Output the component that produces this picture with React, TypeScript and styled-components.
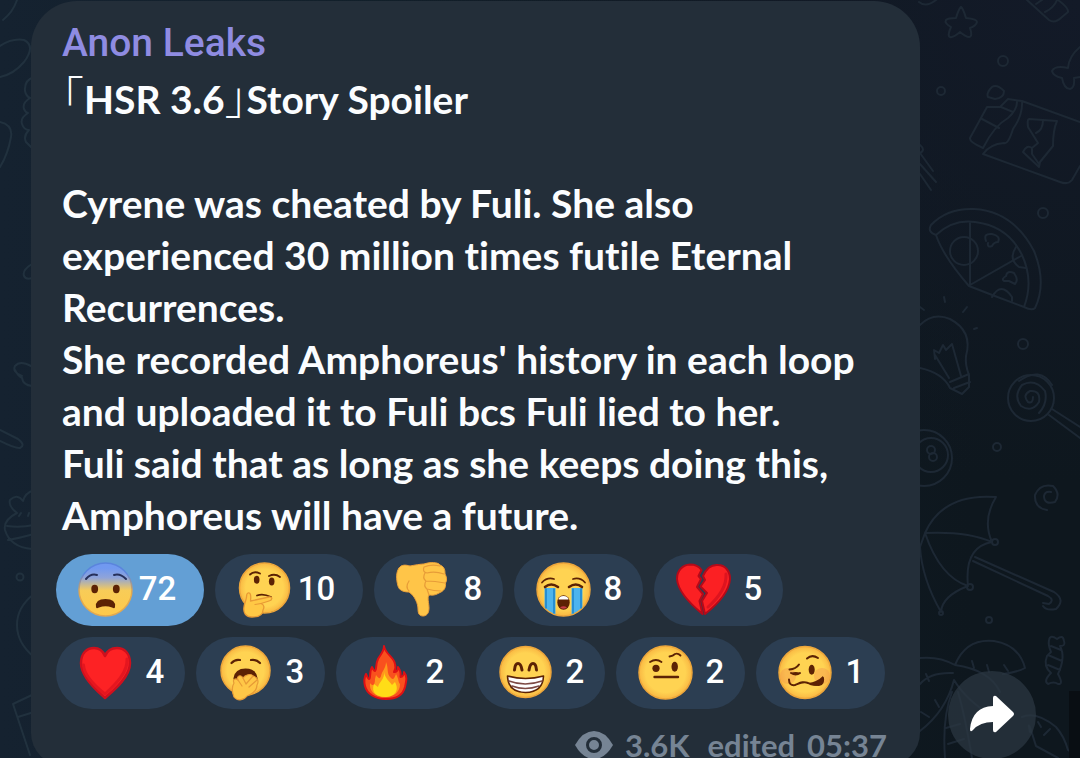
import React from "react";
import styled, { createGlobalStyle } from "styled-components";

const GlobalStyle = createGlobalStyle`
  * { box-sizing: border-box; }
  body { margin: 0; background: #0f1820; }
`;

const Page = styled.main`
  position: relative;
  height: 100vh;
  overflow: hidden;
  background:
    radial-gradient(ellipse at 100% 0%, #131a28 0%, rgba(19, 26, 40, 0) 45%),
    linear-gradient(90deg, #152230 0%, #12202b 30%, #0e171e 90%);
`;

const Doodles = styled.svg<{ $side: "left" | "right" }>`
  position: absolute;
  top: 0;
  ${(p) => p.$side}: 0;
  fill: none;
  stroke: ${(p) => (p.$side === "left" ? "#21313e" : "#1d2834")};
  stroke-width: 2;
  stroke-linecap: round;
  stroke-linejoin: round;
`;

const Row = styled.div`
  position: relative;
  display: flex;
  padding: 1px 0 0 31px;
`;

const Bubble = styled.article`
  flex: 1;
  min-width: 0;
  padding: 16px 25px 0;
  border-radius: 46px 46px 32px 32px;
  background: #232e39;
`;

const Author = styled.h1`
  margin: 0;
  padding: 0 6px;
  font: 500 39px/52px Roboto, sans-serif;
  color: #8f8ce2;
`;

const Message = styled.p`
  margin: 4px 0 0;
  padding: 0 6px;
  font: 700 39px/52px Lato, sans-serif;
  font-variant-ligatures: none;
  color: #fbfdff;
  white-space: pre-line;
`;

const Bracket = styled.span`
  font-family: "Noto Sans CJK JP", sans-serif;
  font-size: 44px;
  font-weight: 300;
  font-feature-settings: "halt";
  line-height: 1px;
`;

const Reactions = styled.div`
  display: flex;
  flex-wrap: wrap;
  gap: 11px;
  margin-top: 13px;
`;

const Chip = styled.button<{ $wide: boolean; $active: boolean }>`
  display: flex;
  align-items: center;
  width: ${(p) => (p.$wide ? 148 : 129)}px;
  height: 72px;
  padding: 0 ${(p) => (p.$wide ? 22 : 8)}px 0 21px;
  border: 0;
  border-radius: 36px;
  background: ${(p) => (p.$active ? "#639fd5" : "#2c3e52")};
  color: #fff;
  font: 500 33px/40px Roboto, sans-serif;
`;

const Emoji = styled.svg`
  flex: none;
  width: 56px;
  height: 56px;
  fill: none;
  stroke-linecap: round;
  stroke-linejoin: round;
`;

const Count = styled.span`
  flex: 1;
  text-align: center;
  padding-bottom: 2px;
`;

const Meta = styled.footer`
  display: flex;
  justify-content: flex-end;
  align-items: center;
  gap: 12px;
  height: 56px;
  padding: 16px 8px 0 0;
  font: 700 31px/40px Lato, sans-serif;
  color: #768494;
`;

const Edited = styled.span`
  margin-left: 6px;
`;

const Side = styled.aside`
  flex: none;
  display: flex;
  align-items: flex-end;
  width: 160px;
  padding: 0 0 6px 28px;
`;

const Share = styled.button`
  width: 88px;
  height: 88px;
  padding: 0;
  border: 0;
  border-radius: 50%;
  background: rgba(43, 55, 66, 0.75);
`;

const ink = "#5c2204";

const Face = ({ cx = 28, cy = 28, r = 26 }: { cx?: number; cy?: number; r?: number }) => (
  <circle cx={cx} cy={cy} r={r} fill="url(#skin)" stroke="#eda63b" strokeWidth="1.5" />
);

const heart =
  "M28 53C24 49 4 34 4 18C4 8 10 3 17 3C22 3 26 6 28 11C30 6 34 3 40 3C47 3 53 8 53 18C53 34 32 49 28 53Z";

const drawings: Record<string, React.ReactNode> = {
  Fearful: (
    <>
      <circle cx="28.5" cy="27.5" r="26.5" fill="url(#fear)" stroke="url(#fearEdge)" strokeWidth="1.5" />
      <path d="M9 17Q14 11 20 13M37 13Q43 11 49 17" stroke="#26305a" strokeWidth="2" />
      <ellipse cx="17.7" cy="27" rx="3.4" ry="4.2" fill={ink} />
      <ellipse cx="39.3" cy="27" rx="3.4" ry="4.2" fill={ink} />
      <path d="M19 45Q18 37 28.500 37Q39 37 38 45Q38 47 35 45.500Q28.500 43 22 45.500Q19 47 19 45Z" fill={ink} />
    </>
  ),
  Thinking: (
    <>
      <Face cx={28.5} cy={26} r={25} />
      <path d="M14 12.500Q18 8.500 24 11.500M33 14Q39 11 44 15M21 33.500Q27 31 35 35" stroke={ink} strokeWidth="1.8" />
      <ellipse cx="20.700" cy="17.700" rx="2.800" ry="4" fill={ink} />
      <ellipse cx="35.700" cy="19.500" rx="2.800" ry="4" fill={ink} />
      <path
        d="M12 31C15 30 15 35 14.500 39L33 35C37 34.500 36.500 38 33 39L25 41.500C29 43 28 46 27 48C27 53 22 55 16 55C10 55 7 51 8 45C8.500 41 10 39 10.500 35C10.500 33 10.500 31.500 12 31Z"
        fill="#ffc845" stroke="#e89a35" strokeWidth="1.3"
      />
      <path d="M25 41.500L19 42.500" stroke="#e89a35" strokeWidth="1.2" />
    </>
  ),
  "Thumbs down": (
    <>
      <path
        d="M4 6C7 2 11 3 15 4C20 3 26 2 29 2C35 0 43 0 45 3C50 5 50 9 50 12C52 15 52 19 50.500 21C51 26 49 29 44 31C39 34 36 33 34 33C32 36 34 41 34 46C34 52 31 54 28 54C24 54 23 51 23 47C23 42 20 34 14 30C8 30 4 28 3 24C1 17 1 10 4 6Z"
        fill="#ffc548" stroke="#eca03a" strokeWidth="1"
      />
      <path
        d="M29 5Q27 10 32 11Q40 9 49 12M30 11Q27 16 31 19Q40 19 50 21M31 19Q28 24 32 27Q39 29 46 29M29 5Q36 2 45 4M14 29C11 26 12 22 14 19M32 27L34 33"
        stroke="#e79c38" strokeWidth="1.200"
      />
    </>
  ),
  Crying: (
    <>
      <Face cx={28.5} cy={27.5} r={26.5} />
      <path d="M9.500 26H20.500V52.500Q14 50 9.500 45ZM36.500 26H47.500V45Q43 50 36.500 52.500Z" fill="#4db4ee" />
      <path d="M11 27V46M38 27V51M19 27V51M46 27V46" stroke="#1e86cc" strokeWidth="1.600" />
      <path d="M7 20.500Q12 15 19 17M38 17Q45 15 50 20.500" stroke={ink} strokeWidth="1.800" />
      <path d="M10 25Q16 20 23 25M34 25Q41 20 47 25" stroke={ink} strokeWidth="2.600" />
      <ellipse cx="28.500" cy="40.500" rx="6.200" ry="7.300" fill={ink} />
      <path d="M23.500 37.500Q24 34 28.500 34T33.500 37.500Z" fill="#fff" />
      <path d="M25 45.500Q28.500 43 32 45.500Q28.500 48 25 45.500Z" fill="#c43c46" />
    </>
  ),
  "Broken heart": (
    <>
      <path
        d="M26.500 8C23 3 19 2.500 15 2.500C8 3 2 8 2 17C3 31 19 45 27.500 52L24.500 39L28 32L22 25L26 17L23.500 14Z"
        fill="#fb2023" stroke="#b50a19" strokeWidth="2"
      />
      <path
        d="M28 14C32 5 38 2.500 43 3C50 3 55 9 55 17C54 31 39 45 30 52L27 39L32 31L25.500 24.500L30 18Z"
        fill="#fb2023" stroke="#b50a19" strokeWidth="2"
      />
      <path d="M51 12C52 26 42 37 33 45" stroke="#dd141f" strokeWidth="3" />
    </>
  ),
  Heart: (
    <>
      <path d={heart} fill="#fd2224" stroke="#cf101d" strokeWidth="2.500" />
      <path d="M50 14C51 27 39 39 28 49C18 41 7 30 6.500 20" stroke="#e5161f" strokeWidth="3" />
    </>
  ),
  Yawning: (
    <>
      <Face cx={28.5} cy={25.5} r={24.5} />
      <path d="M14.500 18Q18 14 23 15M34 15Q39 14 43 18" stroke={ink} strokeWidth="2.200" />
      <path d="M16.500 33Q18 23.500 28.500 23.500T40.500 33Q41 40 28 42Q16 40 16.500 33Z" fill={ink} />
      <path
        d="M17 38C15 34 19 33 21 35C19 31 24 29 26 33C28 30 34 28 36 31C41 32 42 37 40 40C40 46 35 49 30 51C26 56 20 56 17 52C15 47 14 43 17 38Z"
        fill="#ffc747" stroke="#e79b36" strokeWidth="1.200"
      />
      <path d="M21 35L25 41M26 33L29 39M36 31L29 39M40 35L32 42" stroke="#e79b36" strokeWidth="1.200" />
    </>
  ),
  Fire: (
    <>
      <path
        d="M27 1C28 9 37 12 38 19C39 22 38 25 37 27C40 27 41 25 41 22C44 26 44 29 43.500 32C46 32 47 29 47 27C51 32 49 37 48 42C46 50 39 54 29 54C18 54 10 49 8 41C7 37 7 33 9 29C10 31 11 34 12 34C14 34 12 27 15 22C16 24 17 26 18 26C20 25 18 20 21 14C23 10 27 7 27 1Z"
        fill="#f9501e" stroke="#df1014" strokeWidth="2"
      />
      <path d="M29 17C32 24 29 28 34 33C37 36 38 31 39 29C42 34 41 37 43 39C43 48 36 52 28 52C17 52 12 45 13 38C16 42 18 40 18 34L19 30C22 34 23 34 24 31C25 26 29 23 29 17Z" fill="#ff981c" />
      <path d="M27 27C28 33 33 37 35 40L38 37C43 46 37 52 28 52S14 47 17 39L21 42C22 37 28 34 27 27Z" fill="#ffdd17" />
    </>
  ),
  Grinning: (
    <>
      <Face cx={28.5} cy={27} r={25.5} />
      <path d="M17.500 25Q18 18.500 21 18.500T25 25M32 25Q33 18.500 36 18.500T39.500 25" stroke={ink} strokeWidth="3" />
      <path d="M10.500 31Q28.500 36 46.500 31Q46 47 28.500 47.500Q11 47 10.500 31Z" fill="#fff" stroke={ink} strokeWidth="1.600" />
      <path d="M12 36Q28 42 45 36M15 41Q28 46 42 41" stroke="#7d4a45" strokeWidth="1.600" />
    </>
  ),
  Skeptical: (
    <>
      <Face cx={28.5} cy={27.5} r={26.5} />
      <path d="M13 17Q19 13 24.500 17M32.500 11.500Q36 11 38 9Q41 8 43.500 10.500" stroke={ink} strokeWidth="1.800" />
      <circle cx="19" cy="23.300" r="3.600" fill={ink} />
      <ellipse cx="37.700" cy="21.800" rx="3.200" ry="5" fill={ink} />
      <path d="M17.500 32H41" stroke={ink} strokeWidth="2.400" />
    </>
  ),
  Woozy: (
    <>
      <Face cx={28} cy={27.5} r={26} />
      <circle cx="11" cy="31" r="8" fill="#f39a4e" opacity=".45" />
      <circle cx="45" cy="31" r="8" fill="#f39a4e" opacity=".45" />
      <path d="M30 13.500Q35 9 41 13M12.500 24.500Q19 24 22 19.500M14 28Q19 31 23 28" stroke={ink} strokeWidth="2" />
      <path d="M14 28Q19 26 23 28Q19 32 14 28Z" fill={ink} />
      <ellipse cx="34.700" cy="24.700" rx="3" ry="5" fill={ink} />
      <path d="M12 34.500Q12 41 18 40C23 38 26 36 31 38Q36 41 42 39Q47 37 46 33" stroke={ink} strokeWidth="2" />
      <path d="M31 38Q40 37 46 31Q49 40 42 41Q35 41 31 38Z" fill={ink} />
    </>
  ),
};

const reactions = [
  { name: "Fearful", count: 72, active: true },
  { name: "Thinking", count: 10 },
  { name: "Thumbs down", count: 8 },
  { name: "Crying", count: 8 },
  { name: "Broken heart", count: 5 },
  { name: "Heart", count: 4 },
  { name: "Yawning", count: 3 },
  { name: "Fire", count: 2 },
  { name: "Grinning", count: 2 },
  { name: "Skeptical", count: 2 },
  { name: "Woozy", count: 1 },
];

const body = `

Cyrene was cheated by Fuli. She also
experienced 30 million times futile Eternal
Recurrences.
She recorded Amphoreus' history in each loop
and uploaded it to Fuli bcs Fuli lied to her.
Fuli said that as long as she keeps doing this,
Amphoreus will have a future.`;

const Defs = styled.svg`
  position: absolute;
  width: 0;
  height: 0;
`;

const Gradients = () => (
  <Defs aria-hidden="true">
    <defs>
      <radialGradient id="skin">
        <stop offset="0.75" stopColor="#ffd352" />
        <stop offset="1" stopColor="#f9b843" />
      </radialGradient>
      <linearGradient id="fear" x2="0" y2="1">
        <stop offset="0.1" stopColor="#7199f0" />
        <stop offset="0.28" stopColor="#90a4d8" />
        <stop offset="0.52" stopColor="#f8cc58" />
        <stop offset="1" stopColor="#ffc94a" />
      </linearGradient>
      <linearGradient id="fearEdge" x2="0" y2="1">
        <stop offset="0.2" stopColor="#5a84dd" />
        <stop offset="0.55" stopColor="#e2a850" />
      </linearGradient>
    </defs>
  </Defs>
);

const LeftDoodles = () => (
  <Doodles $side="left" width="130" height="758" viewBox="0 0 130 758" aria-hidden="true">
    <path d="M17 0Q13 12 3 20M0 46Q12 38 24 40Q36 46 24 62Q14 74 0 77M0 122Q13 125 11 137Q8 154 0 167" />
    <path d="M34 77Q24 80 25 91Q26 96 30 98Q22 103 24 109Q26 113 28 113Q20 118 22 124Q24 130 29 130Q23 136 26 142L32 148M32 264Q22 270 24 276Q26 280 32 278" />
    <path d="M22 376Q12 372 15 366Q20 360 31 366M15 370Q18 376 22 378Q23 385 32 386M0 430L18 439Q26 445 20 448Q16 449 0 441" />
    <path d="M17 513Q8 506 10 500Q17 493 23 501Q25 493 34 490M17 513Q3 520 5 530Q10 547 32 549M7 526Q20 528 34 525M8 540Q20 538 34 534M19 516L21 513M28 516L29 513" />
    <circle cx="20" cy="577" r="3.500" />
    <path d="M34 594Q17 607 17 625T34 657M34 694L13 704L30 755M18 717L34 712" />
  </Doodles>
);

const RightDoodles = () => (
  <Doodles $side="right" width="180" height="758" viewBox="0 0 180 758" aria-hidden="true">
    <path d="M19 2Q26 8 36 0M127 0L149 20Q155 24 162 17L168 12Q169 8 158 0M136 4L142 0M145 12Q154 8 157 0" />
    <path d="M61 7Q63 8 66 18Q77 19 77 22Q76 26 70 28Q73 37 69 37Q66 37 60 32Q53 38 50 37Q47 36 51 27Q44 23 46 20Q48 18 56 18Q59 8 61 7Z" />
    <circle cx="103" cy="61" r="5" /><circle cx="41" cy="91" r="4" /><circle cx="143" cy="213" r="5" /><circle cx="123" cy="344" r="5" /><circle cx="97" cy="447" r="4" /><circle cx="89" cy="620" r="3" />
    <path d="M180 47Q169 56 168 68Q155 65 152 71Q153 76 162 78Q164 89 170 89Q175 88 174 78L180 77" />
    <path d="M88 97Q86 93 92 87Q97 84 104 91Q104 98 95 99ZM83 154L160 182Q168 185 172 180L180 166M122 101L180 122M122 101L108 99L100 107H87L70 138Q69 142 83 148M83 148Q94 126 108 118Q117 110 117 102M83 154Q90 144 104 143Q108 145 113 129Q123 115 122 101M101 107L113 112M82 119L99 128" />
    <path d="M129 119L157 121Q153 130 153 146L140 162L139 167L123 152Q127 144 132 148L138 143L128 127Q127 119 129 119M143 120Q143 130 136 133M132 148V154L139 164" />
    <path d="M20 145Q26 150 20 153L33 171M20 164L36 182M20 174L31 190" />
    <path d="M31 225Q47 208 74 209Q113 211 134 251Q147 283 135 308Q132 311 124 307Q97 297 69 286Q43 256 36 235Q27 232 31 225ZM36 235Q53 219 75 222Q108 226 122 255Q134 281 124 307M70 223V285L121 256" />
    <circle cx="64" cy="251" r="14" />
    <path d="M86 241Q83 233 92 234Q101 236 98 242Q94 242 92 246Q87 248 88 243M104 281Q101 279 106 276Q107 270 114 273Q119 280 115 284L109 281ZM116 247Q108 259 119 267L126 268M92 297Q101 281 112 297L112 301" />
    <path d="M20 325Q33 312 50 319Q73 331 66 356Q65 365 69 375L69 387L62 394L50 388Q43 373 20 368M69 374L50 382M70 382L54 388M35 355L49 378M61 376L52 344L46 350L43 345L39 353L34 350L35 359M44 297L45 302M67 307L63 312M20 307L24 310M74 329L77 328" />
    <circle cx="131" cy="398" r="23" />
    <path d="M133 397Q133 404 128 402Q122 395 130 391Q141 390 139 402Q132 413 121 406Q113 396 122 385Q135 378 145 391Q148 403 139 413M149 415L180 438M152 409L180 427M119 381Q140 366 152 385" />
    <circle cx="24" cy="458" r="28" /><circle cx="31" cy="455" r="17" /><circle cx="31" cy="450" r="4" /><circle cx="33" cy="457" r="4" />
    <path d="M147 510Q134 508 135 495Q140 483 153 486Q161 494 155 502Q144 505 144 496Q145 491 151 492" />
    <path d="M25 533Q43 493 96 497Q82 520 92 542Q67 531 25 533L20 547Q22 579 41 612Q42 596 68 586Q40 577 25 533M68 586Q64 547 92 542M75 557L154 592Q166 600 156 609Q146 611 143 606M73 561L148 596Q155 600 149 604L143 603" />
    <circle cx="95" cy="542" r="3" /><circle cx="70" cy="587" r="3" /><circle cx="41" cy="613" r="2" />
    <path d="M151 652Q148 645 149 640Q150 634 157 639Q163 634 164 641Q166 646 160 646Q166 657 158 674Q164 685 158 684Q154 681 148 684Q143 681 151 673Q143 666 147 656ZM151 646L161 650M148 655L162 661M148 665L160 670" />
    <path d="M20 658Q39 656 55 665Q66 638 94 641Q119 645 125 668Q118 672 103 674M55 665Q90 670 100 692M53 673Q30 672 20 684M54 680Q46 711 20 731M54 680Q66 700 92 716M45 758Q42 718 52 692M72 758Q65 716 58 692M46 728L60 724M48 744L64 739M72 661L74 668M87 665L89 672M104 665L108 671M26 674L29 681M21 712L29 717M35 700L39 707M122 717Q136 711 156 727Q164 736 168 750L180 758M130 732Q126 714 136 746L158 758M138 722L141 727M150 729L144 735" />
    <rect x="169" y="691" width="11" height="67" fill="#090e13" stroke="none" />
  </Doodles>
);

export default function App() {
  return (
    <Page>
      <GlobalStyle />
      <Gradients />
      <LeftDoodles />
      <RightDoodles />
      <Row>
        <Bubble>
          <Author>Anon Leaks</Author>
          <Message>
            <Bracket>「</Bracket>HSR 3.6<Bracket>」</Bracket>Story Spoiler{body}
          </Message>
          <Reactions>
            {reactions.map((r) => (
              <Chip key={r.name} $wide={r.count > 9} $active={!!r.active} aria-label={`${r.name} ${r.count}`}>
                <Emoji viewBox="0 0 56 56" aria-hidden="true">{drawings[r.name]}</Emoji>
                <Count>{r.count}</Count>
              </Chip>
            ))}
          </Reactions>
          <Meta>
            <svg width="38" height="28" viewBox="0 0 38 28" aria-hidden="true">
              <path d="M0 14Q8 0 19 0T38 14Q30 28 19 28T0 14Z" fill="#768494" />
              <circle cx="19" cy="14" r="6.500" fill="#768494" stroke="#232e39" strokeWidth="3" />
            </svg>
            <span>3.6K</span>
            <Edited>edited</Edited>
            <time>05:37</time>
          </Meta>
        </Bubble>
        <Side>
          <Share aria-label="Share">
            <svg width="88" height="88" viewBox="0 0 88 88" aria-hidden="true">
              <path d="M45 27Q45 24 48 25L65 41Q67 43 65 45L48 61Q45 62 45 59V51Q32 51 25 59Q22 62 22 58Q24 36 45 35Z" fill="#fff" />
            </svg>
          </Share>
        </Side>
      </Row>
    </Page>
  );
}
